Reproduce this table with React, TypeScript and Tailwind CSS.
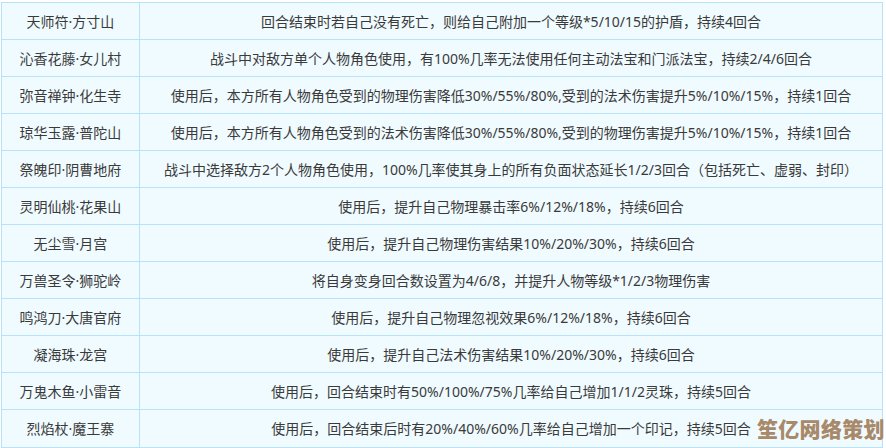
import React from "react";

const rows = [
  ["天师符·方寸山", "回合结束时若自己没有死亡，则给自己附加一个等级*5/10/15的护盾，持续4回合"],
  ["沁香花藤·女儿村", "战斗中对敌方单个人物角色使用，有100%几率无法使用任何主动法宝和门派法宝，持续2/4/6回合"],
  ["弥音禅钟·化生寺", "使用后，本方所有人物角色受到的物理伤害降低30%/55%/80%,受到的法术伤害提升5%/10%/15%，持续1回合"],
  ["琼华玉露·普陀山", "使用后，本方所有人物角色受到的法术伤害降低30%/55%/80%,受到的物理伤害提升5%/10%/15%，持续1回合"],
  ["祭魄印·阴曹地府", "战斗中选择敌方2个人物角色使用，100%几率使其身上的所有负面状态延长1/2/3回合（包括死亡、虚弱、封印）"],
  ["灵明仙桃·花果山", "使用后，提升自己物理暴击率6%/12%/18%，持续6回合"],
  ["无尘雪·月宫", "使用后，提升自己物理伤害结果10%/20%/30%，持续6回合"],
  ["万兽圣令·狮驼岭", "将自身变身回合数设置为4/6/8，并提升人物等级*1/2/3物理伤害"],
  ["鸣鸿刀·大唐官府", "使用后，提升自己物理忽视效果6%/12%/18%，持续6回合"],
  ["凝海珠·龙宫", "使用后，提升自己法术伤害结果10%/20%/30%，持续6回合"],
  ["万鬼木鱼·小雷音", "使用后，回合结束时有50%/100%/75%几率给自己增加1/1/2灵珠，持续5回合"],
  ["烈焰杖·魔王寨", "使用后，回合结束后时有20%/40%/60%几率给自己增加一个印记，持续5回合"],
];

export default function App() {
  return (
    <div
      className="relative w-[886px] h-[448px] bg-white overflow-hidden"
      style={{ fontFamily: '"Noto Sans", "Noto Sans CJK SC", sans-serif' }}
    >
      <div className="ml-px mt-[2px] w-[882px] border border-[#b8e2f8] bg-[#f0fbff] text-[14px] text-[#3a3a3a]">
        {rows.map(([name, desc], i) => (
          <div
            key={name}
            className={`flex h-[37px] ${i < rows.length - 1 ? "border-b border-[#b8e2f8]" : ""}`}
          >
            <div className="w-[138px] shrink-0 flex items-center justify-center border-r border-[#b8e2f8] whitespace-nowrap">
              {name}
            </div>
            <div className="flex-1 flex items-center justify-center whitespace-nowrap">{desc}</div>
          </div>
        ))}
      </div>
      <div
        className="absolute left-[757px] top-[418px] text-[21px] font-black tracking-[0.3px] text-[#a8896a] whitespace-nowrap leading-none"
        style={{ fontFamily: '"Noto Sans CJK SC", sans-serif' }}
      >
        笙亿网络策划
      </div>
    </div>
  );
}
